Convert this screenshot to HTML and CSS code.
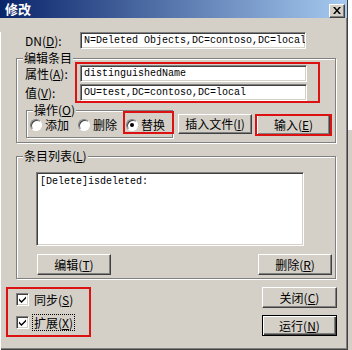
FILE: index.html
```html
<!DOCTYPE html>
<html lang="zh-CN">
<head>
  <meta charset="UTF-8" />
  <title>修改</title>
  <link rel="stylesheet" href="styles.css">
</head>
<body>
  <div class="screen">
    <div class="dialog">

      <!-- Title bar -->
      <div class="titlebar">
        <span class="title">修改</span>
        <span class="close">
          <svg width="8" height="7" viewBox="0 0 8 7"><path d="M0 0h2l2 2.4 2-2.4h2l-3 3.5 3 3.5h-2l-2-2.4-2 2.4h-2l3-3.5z" fill="#000"/></svg>
        </span>
      </div>

      <div class="client">
        <div class="dn-row">
          <label class="lbl">DN(<u>D</u>):</label>
          <div class="edit">N=Deleted Objects,DC=contoso,DC=local</div>
        </div>

        <!-- Edit entry -->
        <div class="group edit-group">
          <span class="group-label">编辑条目</span>
          <div class="field-row">
            <label class="lbl">属性(<u>A</u>):</label>
            <div class="edit">distinguishedName</div>
          </div>
          <div class="field-row second">
            <label class="lbl">值(<u>V</u>):</label>
            <div class="edit">OU=test,DC=contoso,DC=local</div>
          </div>
          <div class="op-row">
            <div class="group op-group">
              <span class="group-label">操作(<u>O</u>)</span>
              <div class="radios">
                <span class="radio-item"><span class="radio"></span><span>添加</span></span>
                <span class="radio-item"><span class="radio"></span><span>删除</span></span>
                <span class="radio-item"><span class="radio on"></span><span>替换</span></span>
              </div>
            </div>
            <button class="btn insert">插入文件(<u>I</u>)</button>
            <button class="btn enter">输入(<u>E</u>)</button>
          </div>
        </div>

        <!-- Entry list -->
        <div class="group list-group">
          <span class="group-label">条目列表(<u>L</u>)</span>
          <div class="listbox">[Delete]isdeleted:</div>
          <div class="list-buttons">
            <button class="btn">编辑(<u>T</u>)</button>
            <button class="btn del">删除(<u>R</u>)</button>
          </div>
        </div>

        <div class="bottom-row">
          <div class="checks">
            <div class="check-item"><span class="check"><svg width="9" height="9" viewBox="0 0 9 9"><path d="M1 3.5l2.5 2.5 4.5-4.5v2l-4.5 4.5-2.5-2.5z" fill="#000"/></svg></span><span>同步(<u>S</u>)</span></div>
            <div class="check-item second"><span class="check"><svg width="9" height="9" viewBox="0 0 9 9"><path d="M1 3.5l2.5 2.5 4.5-4.5v2l-4.5 4.5-2.5-2.5z" fill="#000"/></svg></span><span class="focus">扩展(<u>X</u>)</span></div>
          </div>
          <div class="actions">
            <button class="btn wide">关闭(<u>C</u>)</button>
            <button class="btn wide default">运行(<u>N</u>)</button>
          </div>
        </div>
      </div>

      <!-- red annotation boxes -->
      <div class="mark mark-fields"></div>
      <div class="mark mark-replace"></div>
      <div class="mark mark-enter"></div>
      <div class="mark mark-checks"></div>
    </div>
    <div class="backdrop"></div>
  </div>
</body>
</html>
```

FILE: styles.css
```css
* {
  box-sizing: border-box;
  margin: 0;
  padding: 0;
}

body {
  font-family: "Noto Sans CJK SC", "Liberation Sans", sans-serif;
  font-size: 12px;
  color: #000;
  background: #d4d0c8;
  overflow: hidden;
}

.screen {
  display: flex;
  width: 352px;
  height: 350px;
}

.dialog {
  position: relative;
  width: 348px;
  height: 350px;
  background: #d4d0c8;
  border-right: 1px solid #404040;
  border-bottom: 1px solid #404040;
  box-shadow: inset -1px -1px #808080;
}

.backdrop {
  flex: 1;
  background: linear-gradient(#fff 0, #fff 130px, #d4d0c8 130px);
}

/* Title bar */
.titlebar {
  display: flex;
  justify-content: space-between;
  align-items: center;
  height: 18px;
  padding: 0 2px 0 5px;
  background: linear-gradient(90deg, #0a246a, #a6caf0);
}

.title {
  color: #fff;
  font-weight: bold;
  font-size: 13px;
  line-height: 14px;
}

.close {
  display: flex;
  align-items: center;
  justify-content: center;
  width: 16px;
  height: 14px;
  margin-top: 3px;
  background: #d4d0c8;
  border: 1px solid;
  border-color: #fff #404040 #404040 #fff;
  box-shadow: inset -1px -1px #808080;
}

.client {
  height: 331px;
  box-shadow: inset 1px 0 #fff;
}

/* Labels and edits */
.lbl {
  width: 55px;
  line-height: 14px;
  white-space: nowrap;
}

.edit {
  width: 227px;
  height: 17px;
  padding: 2px 0 0 3px;
  background: #fff;
  border: 1px solid;
  border-color: #808080 #fff #fff #808080;
  box-shadow: inset 1px 1px #404040, inset -1px -1px #d4d0c8;
  font-family: "Liberation Mono", monospace;
  font-size: 10px;
  line-height: 12px;
  white-space: nowrap;
  overflow: hidden;
}

.dn-row {
  display: flex;
  align-items: center;
  margin: 14px 0 0 25px;
}

.dn-row .edit {
  width: 226px;
}

/* Group boxes */
.group {
  border: 1px solid #808080;
  box-shadow: inset 1px 1px #fff, 1px 1px #fff;
}

.group-label {
  display: block;
  width: fit-content;
  margin: -7px 0 0 6px;
  padding: 0 1px;
  line-height: 12px;
  background: #d4d0c8;
  white-space: nowrap;
}

.edit-group {
  width: 320px;
  margin: 9px 0 0 16px;
  padding-bottom: 4px;
}

.field-row {
  display: flex;
  align-items: center;
  margin: 1px 0 0 8px;
}

.field-row.second {
  margin-top: 2px;
}

.op-row {
  display: flex;
  align-items: flex-start;
  margin-top: 9px;
}

.op-group {
  width: 147px;
  height: 28px;
  margin-left: 9px;
}

.radios {
  display: flex;
  gap: 9px;
  margin: 3px 0 0 3px;
}

.radio-item {
  display: flex;
  align-items: center;
  gap: 3px;
  line-height: 12px;
}

.radio {
  position: relative;
  width: 12px;
  height: 12px;
  border-radius: 50%;
  background: #fff;
  border: 1px solid;
  border-color: #808080 #fff #fff #808080;
  box-shadow: inset 1px 1px #404040;
}

.radio.on::after {
  content: "";
  position: absolute;
  left: 3px;
  top: 3px;
  width: 4px;
  height: 4px;
  border-radius: 50%;
  background: #000;
}

/* Buttons */
.btn {
  width: 74px;
  height: 21px;
  font-family: inherit;
  font-size: 12px;
  line-height: 14px;
  color: #000;
  background: #d4d0c8;
  border: 1px solid;
  border-color: #fff #404040 #404040 #fff;
  box-shadow: inset -1px -1px #808080;
  white-space: nowrap;
}

.btn.insert {
  height: 20px;
  margin: 4px 0 0 5px;
}

.btn.enter {
  width: 73px;
  height: 20px;
  margin: 5px 0 0 5px;
}

.btn.default {
  border: 1px solid #000;
  box-shadow: inset 1px 1px #fff, inset -1px -1px #404040, inset -2px -2px #808080;
}

.btn.wide {
  width: 75px;
}

/* Entry list */
.list-group {
  width: 320px;
  margin: 13px 0 0 16px;
  padding-bottom: 3px;
}

.listbox {
  width: 268px;
  height: 74px;
  margin: 10px 0 0 19px;
  padding: 2px 0 0 3px;
  background: #fff;
  border: 1px solid;
  border-color: #808080 #fff #fff #808080;
  box-shadow: inset 1px 1px #404040, inset -1px -1px #d4d0c8;
  font-family: "Liberation Mono", monospace;
  font-size: 10px;
  line-height: 14px;
}

.list-buttons {
  display: flex;
  margin: 8px 0 0 20px;
}

.btn.del {
  margin-left: 147px;
}

/* Bottom */
.bottom-row {
  display: flex;
  justify-content: space-between;
}

.checks {
  margin: 14px 0 0 16px;
}

.check-item {
  display: flex;
  align-items: center;
  gap: 5px;
  height: 13px;
  line-height: 13px;
}

.check-item.second {
  margin-top: 10px;
}

.check {
  display: flex;
  align-items: center;
  justify-content: center;
  width: 13px;
  height: 13px;
  background: #fff;
  border: 1px solid;
  border-color: #808080 #fff #fff #808080;
  box-shadow: inset 1px 1px #404040, inset -1px -1px #d4d0c8;
}

.focus {
  outline: 1px dotted #000;
  outline-offset: 1px;
}

.actions {
  display: flex;
  flex-direction: column;
  gap: 7px;
  margin: 8px 10px 0 0;
}

/* Red annotation boxes */
.mark {
  position: absolute;
  border: 2px solid #dd1111;
}

.mark-fields {
  left: 75px;
  top: 62px;
  width: 245px;
  height: 41px;
}

.mark-replace {
  left: 123px;
  top: 111px;
  width: 51px;
  height: 23px;
}

.mark-enter {
  left: 255px;
  top: 114px;
  width: 77px;
  height: 22px;
}

.mark-checks {
  left: 6px;
  top: 287px;
  width: 85px;
  height: 50px;
}
```
